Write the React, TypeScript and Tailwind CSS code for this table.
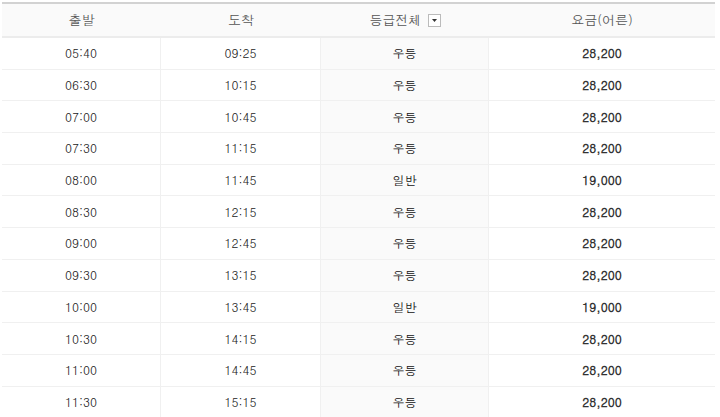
const ROWS = [
  ['05:40', '09:25', '우등', '28,200'],
  ['06:30', '10:15', '우등', '28,200'],
  ['07:00', '10:45', '우등', '28,200'],
  ['07:30', '11:15', '우등', '28,200'],
  ['08:00', '11:45', '일반', '19,000'],
  ['08:30', '12:15', '우등', '28,200'],
  ['09:00', '12:45', '우등', '28,200'],
  ['09:30', '13:15', '우등', '28,200'],
  ['10:00', '13:45', '일반', '19,000'],
  ['10:30', '14:15', '우등', '28,200'],
  ['11:00', '14:45', '우등', '28,200'],
  ['11:30', '15:15', '우등', '28,200'],
];

export default function App() {
  return (
    <div className="w-[720px] h-[417px] overflow-hidden bg-white pl-[2px] pr-[5px] pt-[2px] font-['Dotum','Noto_Sans_CJK_KR',sans-serif] text-[12px]">
      <div className="border-t-2 border-[#d2d2d2]">
        <div className="grid grid-cols-[159px_160px_168px_1fr] h-[34px] bg-[#fafafa] border-b-2 border-[#ececec] text-[#555] text-[13px] items-center text-center">
          <div>출발</div>
          <div>도착</div>
          <div className="flex items-center justify-center gap-[6px]">
            <span>등급전체</span>
            <span className="w-[13px] h-[13px] border border-[#bbb] bg-white flex items-center justify-center">
              <svg width="5" height="3" viewBox="0 0 5 3"><path d="M0 0h5L2.5 3z" fill="#333" /></svg>
            </span>
          </div>
          <div>요금(어른)</div>
        </div>
        {ROWS.map((r, i) => (
          <div key={i} className="grid grid-cols-[159px_160px_168px_1fr] h-[31.7px] border-b border-[#f0f0f0] items-stretch text-center">
            <div className="flex items-center justify-center border-r border-[#f0f0f0] text-[#222]">{r[0]}</div>
            <div className="flex items-center justify-center border-r border-[#f0f0f0] text-[#222]">{r[1]}</div>
            <div className="flex items-center justify-center border-r border-[#f0f0f0] bg-[#fafafa] text-[#111] font-semibold">{r[2]}</div>
            <div className="flex items-center justify-center text-[#333] font-bold">{r[3]}</div>
          </div>
        ))}
      </div>
    </div>
  );
}
